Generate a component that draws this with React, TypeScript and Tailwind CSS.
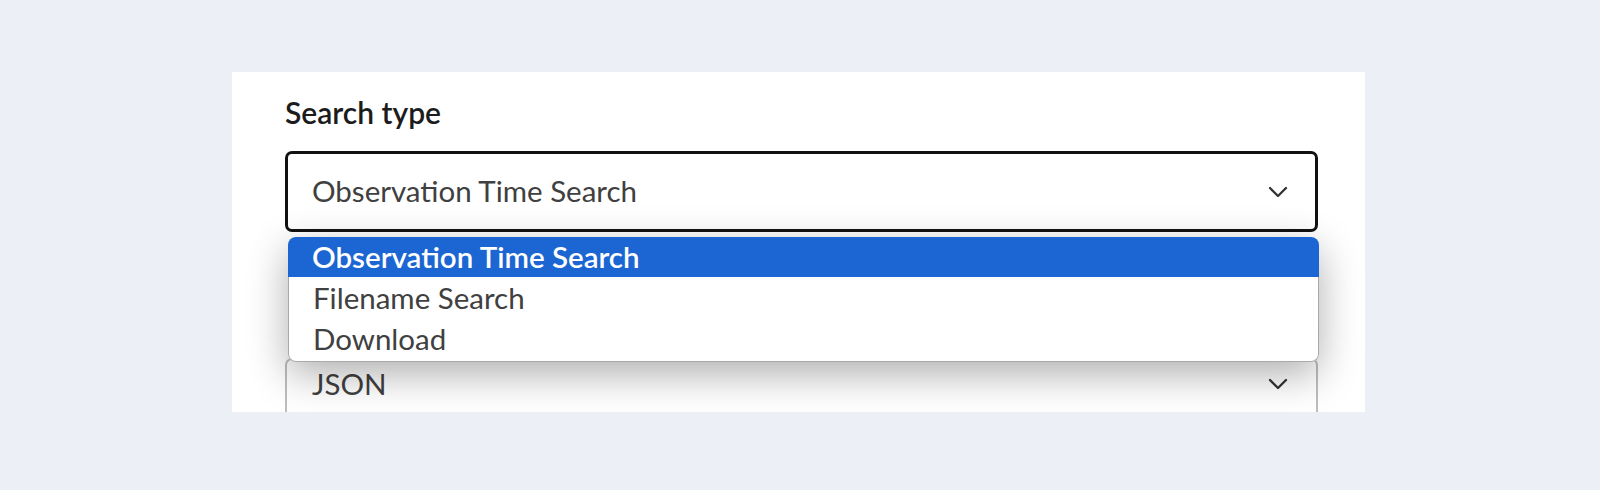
import React from "react";

function Chevron() {
  return (
    <svg width="20" height="12" viewBox="0 0 20 12" fill="none" className="shrink-0">
      <polyline points="2,2 10,10 18,2" stroke="#333333" strokeWidth="2.3" strokeLinecap="round" strokeLinejoin="round" />
    </svg>
  );
}

export default function App() {
  const font = { fontFamily: "Lato, 'Noto Sans', sans-serif" };
  return (
    <div className="w-[1600px] h-[490px] bg-[#ECEFF6] pt-[72px]" style={font}>
      <div className="ml-[232px] w-[1133px] h-[340px] overflow-hidden bg-white pl-[53px] pr-[47px] pt-[22px]">
        <div className="text-[30px] leading-[36px] font-semibold text-[#1c1c1c]">Search type</div>
        <div className="relative mt-[21px] z-10">
          <div className="h-[81px] rounded-[7px] border-[3px] border-[#111111] bg-white flex items-center justify-between pl-[24px] pr-[27px]">
            <span className="text-[29.5px] text-[#404040]">Observation Time Search</span>
            <Chevron />
          </div>
          <div className="absolute left-[3px] right-[-1px] top-[86px] rounded-[8px] bg-white shadow-[0_12px_40px_rgba(0,0,0,0.32)] text-[29.5px] leading-[40px]">
            <div className="h-[40px] rounded-t-[8px] bg-[#1B66D2] text-white font-semibold pl-[24px] flex items-center">
              Observation Time Search
            </div>
            <div className="border-x border-b border-[#a9a9a9] rounded-b-[8px] pb-[2px]">
              <div className="h-[41px] pl-[24px] flex items-center text-[#404040]">Filename Search</div>
              <div className="h-[41px] pl-[24px] flex items-center text-[#404040]">Download</div>
            </div>
          </div>
        </div>
        <div className="mt-[126px] h-[81px] rounded-[7px] border-2 border-[#bdbdbd] bg-white pl-[25px] pr-[28px] pt-[6px]">
          <div className="h-[36px] flex items-center justify-between">
            <span className="text-[29.5px] text-[#404040]">JSON</span>
            <Chevron />
          </div>
        </div>
      </div>
    </div>
  );
}
